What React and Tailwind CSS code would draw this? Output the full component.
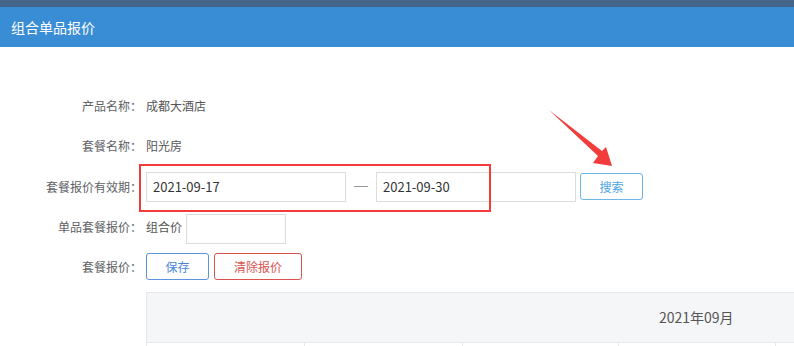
const font = {
  fontFamily: '"Noto Sans CJK SC", "Noto Sans", sans-serif',
};

function Label({ children }) {
  return (
    <div className="w-[142px] shrink-0 text-right text-[12px] text-[#606266]">
      {children}
    </div>
  );
}

function Arrow() {
  return (
    <svg
      className="pointer-events-none absolute left-0 top-0"
      width="794"
      height="346"
      viewBox="0 0 794 346"
    >
      <polygon
        points="549,110 602,151 606,147 612,166 593,163 598,156"
        fill="#f23b3b"
      />
    </svg>
  );
}

export default function App() {
  const cols = [158, 158, 156, 157, 157];

  return (
    <div
      className="relative h-[346px] w-[794px] overflow-hidden bg-white"
      style={font}
    >
      <div className="h-[7px] bg-[#45658a]" />
      <div className="flex h-[40px] items-center bg-[#398dd5] pl-[11px] text-[14px] text-white">
        组合单品报价
      </div>

      <div className="pt-[39px]">
        <div className="flex h-10 items-center">
          <Label>产品名称：</Label>
          <div className="pl-[4px] text-[12px] text-[#555]">成都大酒店</div>
        </div>

        <div className="flex h-10 items-center">
          <Label>套餐名称：</Label>
          <div className="pl-[4px] text-[12px] text-[#555]">阳光房</div>
        </div>

        <div className="flex h-[41px] items-center">
          <Label>套餐报价有效期：</Label>
          <div className="relative ml-[4px] flex items-center">
            <div className="flex h-[30px] w-[200px] items-center border border-[#dcdcdc] pl-[6px] text-[13px] text-[#333]">
              2021-09-17
            </div>
            <div className="flex w-[30px] justify-center">
              <div className="h-px w-[14px] bg-[#999]" />
            </div>
            <div className="flex h-[30px] w-[200px] items-center border border-[#dcdcdc] pl-[6px] text-[13px] text-[#333]">
              2021-09-30
            </div>
            <button className="ml-[4px] flex h-[27px] w-[63px] items-center justify-center rounded-[3px] border border-[#6cb6ec] text-[12px] text-[#4aa3e6]">
              搜索
            </button>
            <div className="absolute left-[-7px] top-[-8px] h-[48px] w-[352px] border-2 border-[#f23b3b]" />
          </div>
        </div>

        <div className="flex h-[40px] items-center">
          <Label>单品套餐报价：</Label>
          <div className="flex items-center pl-[4px]">
            <span className="text-[12px] text-[#555]">组合价</span>
            <div className="ml-[4px] mt-[4px] h-[30px] w-[100px] border border-[#dcdcdc]" />
          </div>
        </div>

        <div className="flex h-[39px] items-center">
          <Label>套餐报价：</Label>
          <div className="flex items-center gap-[5px] pl-[4px]">
            <button className="flex h-[27px] w-[63px] items-center justify-center rounded-[3px] border border-[#5c93dd] text-[12px] text-[#4a86d6]">
              保存
            </button>
            <button className="flex h-[27px] w-[88px] items-center justify-center rounded-[3px] border border-[#d9534f] text-[12px] text-[#d9534f]">
              清除报价
            </button>
          </div>
        </div>

        <div className="ml-[146px] mt-[6px] w-[700px] border border-[#e6e8eb]">
          <div className="flex h-[49px] items-center bg-[#f5f6f8] pl-[512px] text-[14px] text-[#555]">
            2021年09月
          </div>
          <div className="flex h-[20px] border-t border-[#e6e8eb]">
            {cols.map((w, i) => (
              <div
                key={i}
                className="shrink-0 border-r border-[#e6e8eb]"
                style={{ width: w }}
              />
            ))}
          </div>
        </div>
      </div>

      <Arrow />
    </div>
  );
}
